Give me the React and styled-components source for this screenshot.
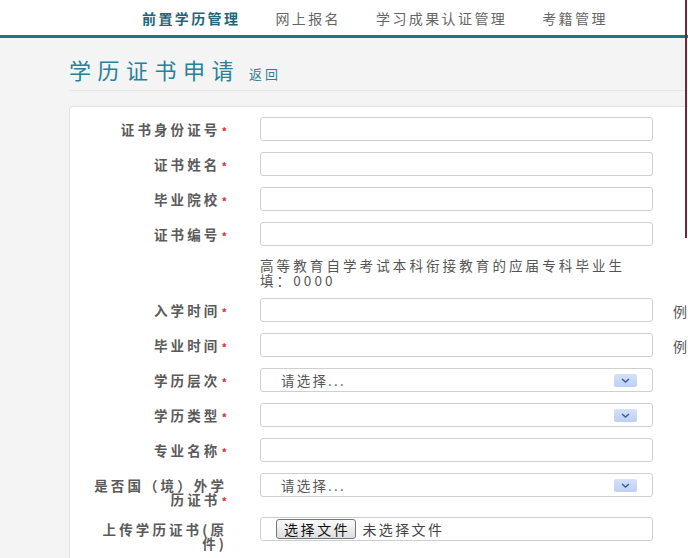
import React from 'react'
import styled, { createGlobalStyle } from 'styled-components'

const GlobalStyle = createGlobalStyle`
    html, body {
        margin: 0;
        padding: 0;
        background: #f4f4f4;
        overflow: hidden;
    }
    body {
        font-family: "Noto Sans CJK SC", "Liberation Sans", sans-serif;
        color: #555;
    }
`

const Page = styled.div`
    position: relative;
    width: 688px;
    height: 558px;
    overflow: hidden;
`

const Header = styled.div`
    height: 35px;
    background: #fff;
    border-bottom: 3px solid #1d7688;
    display: flex;
    align-items: center;
    padding-left: 142px;
`

const Nav = styled.div`
    display: flex;
    gap: 35px;
`

const NavItem = styled.div`
    font-size: 14px;
    letter-spacing: 2.4px;
    line-height: 16px;
    color: ${(props) => (props.active ? '#1f6677' : '#666')};
    font-weight: ${(props) => (props.active ? 700 : 400)};
`

const Content = styled.div`
    padding-left: 69px;
    width: 760px;
`

const TitleBar = styled.div`
    display: flex;
    align-items: baseline;
    gap: 9px;
    height: 53px;
    padding-top: 18px;
    box-sizing: border-box;
    border-bottom: 1px solid #e6e6e6;
`

const Title = styled.h1`
    margin: 0;
    font-size: 22px;
    line-height: 26px;
    font-weight: 400;
    letter-spacing: 6.5px;
    color: #23839a;
`

const Back = styled.a`
    font-size: 13px;
    letter-spacing: 3px;
    color: #2c7f93;
    cursor: pointer;
`

const Card = styled.div`
    margin-top: 15px;
    background: #fff;
    border: 1px solid #e2e2e2;
    border-radius: 4px;
    padding: 10px 0 20px;
    display: flex;
    flex-direction: column;
    gap: 11px;
`

const Row = styled.div`
    display: grid;
    grid-template-columns: 157px 393px auto;
    column-gap: 33px;
    align-items: start;
`

const Label = styled.div`
    padding: 5px 0 0 14px;
    text-align: right;
    font-size: 13.5px;
    line-height: 14px;
    letter-spacing: 3.1px;
    font-weight: 700;
    color: #5a5a5a;
`

const Star = styled.span`
    display: inline-block;
    vertical-align: top;
    margin: 4px 0 0 1px;
    height: 10px;
    color: #e02a2a;
    font-size: 11px;
    line-height: 10px;
    letter-spacing: 0;
`

const Input = styled.input`
    box-sizing: border-box;
    width: 393px;
    height: 24px;
    border: 1px solid #cfcfcf;
    border-radius: 3px;
    background: #fff;
    margin: 0;
    padding: 0 8px;
    outline: none;
`

const Select = styled.div`
    box-sizing: border-box;
    width: 393px;
    height: 24px;
    border: 1px solid #cfcfcf;
    border-radius: 3px;
    display: flex;
    align-items: center;
    justify-content: space-between;
    padding: 0 15px 0 20px;
`

const SelectText = styled.span`
    font-size: 13.5px;
    letter-spacing: 2.2px;
    color: #555;
`

const Arrow = styled.span`
    width: 23px;
    height: 13px;
    border-radius: 2px;
    background: linear-gradient(#d4e2fa, #bcd0f4);
    display: flex;
    align-items: center;
    justify-content: center;
`

const FileBox = styled.div`
    box-sizing: border-box;
    width: 393px;
    height: 24px;
    border: 1px solid #cfcfcf;
    border-radius: 3px;
    display: flex;
    align-items: center;
    gap: 6px;
    padding-left: 15px;
`

const FileButton = styled.button`
    height: 20px;
    padding: 0 5px 0 7px;
    border: 1px solid #707a86;
    border-radius: 3px;
    background: linear-gradient(#fafafa, #dedede);
    font-family: inherit;
    font-size: 14px;
    letter-spacing: 2.6px;
    color: #111;
    line-height: 18px;
`

const FileText = styled.span`
    font-size: 14px;
    letter-spacing: 2.4px;
    color: #444;
`

const Hint = styled.div`
    width: 380px;
    padding-top: 1px;
    font-size: 13.5px;
    line-height: 14.5px;
    letter-spacing: 3.1px;
    color: #555;
`

const Example = styled.div`
    padding-top: 3px;
    margin-left: -13px;
    font-size: 14px;
    color: #555;
`

const EdgeLine = styled.div`
    position: absolute;
    top: 0;
    right: 1px;
    width: 2px;
    height: 238px;
    background: #6a2a3c;
`

const Chevron = () => (
    <svg width="9" height="5" viewBox="0 0 9 5">
        <path d="M1 1 L4.5 4 L8 1" fill="none" stroke="#3d5d92" strokeWidth="1.5" />
    </svg>
)

const Field = ({ label, required = true, children, extra }) => (
    <Row>
        <Label>
            {label}
            {required && <Star>*</Star>}
        </Label>
        {children}
        {extra ? <Example>{extra}</Example> : <span />}
    </Row>
)

const App = () => {
    return (
        <Page>
            <GlobalStyle />
            <Header>
                <Nav>
                    <NavItem active>前置学历管理</NavItem>
                    <NavItem>网上报名</NavItem>
                    <NavItem>学习成果认证管理</NavItem>
                    <NavItem>考籍管理</NavItem>
                </Nav>
            </Header>
            <Content>
                <TitleBar>
                    <Title>学历证书申请</Title>
                    <Back>返回</Back>
                </TitleBar>
                <Card>
                    <Field label="证书身份证号"><Input type="text" /></Field>
                    <Field label="证书姓名"><Input type="text" /></Field>
                    <Field label="毕业院校"><Input type="text" /></Field>
                    <Field label="证书编号"><Input type="text" /></Field>
                    <Row>
                        <span />
                        <Hint>高等教育自学考试本科衔接教育的应届专科毕业生填：0000</Hint>
                        <span />
                    </Row>
                    <Field label="入学时间" extra="例"><Input type="text" /></Field>
                    <Field label="毕业时间" extra="例"><Input type="text" /></Field>
                    <Field label="学历层次">
                        <Select>
                            <SelectText>请选择...</SelectText>
                            <Arrow><Chevron /></Arrow>
                        </Select>
                    </Field>
                    <Field label="学历类型">
                        <Select>
                            <SelectText></SelectText>
                            <Arrow><Chevron /></Arrow>
                        </Select>
                    </Field>
                    <Field label="专业名称"><Input type="text" /></Field>
                    <Field label="是否国（境）外学历证书">
                        <Select>
                            <SelectText>请选择...</SelectText>
                            <Arrow><Chevron /></Arrow>
                        </Select>
                    </Field>
                    <Field label="上传学历证书(原件)" required={false}>
                        <FileBox>
                            <FileButton>选择文件</FileButton>
                            <FileText>未选择文件</FileText>
                        </FileBox>
                    </Field>
                </Card>
            </Content>
            <EdgeLine />
        </Page>
    )
}

export default App
